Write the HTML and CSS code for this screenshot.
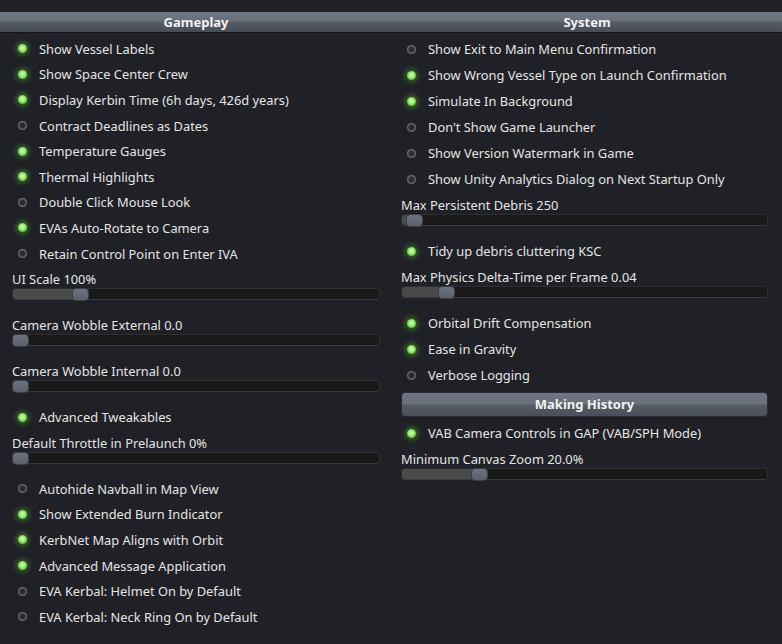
FILE: index.html
```html
<!DOCTYPE html>
<html>
<head>
<meta charset="utf-8">
<link rel="stylesheet" href="styles.css">
</head>
<body>
<div class="headbar">
  <div class="headcell">Gameplay</div>
  <div class="headcell">System</div>
</div>
<div class="cols">
  <div class="col col-left">
    <div class="toggle"><span class="dot on"></span>Show Vessel Labels</div>
    <div class="toggle"><span class="dot on"></span>Show Space Center Crew</div>
    <div class="toggle"><span class="dot on"></span>Display Kerbin Time (6h days, 426d years)</div>
    <div class="toggle"><span class="dot"></span>Contract Deadlines as Dates</div>
    <div class="toggle"><span class="dot on"></span>Temperature Gauges</div>
    <div class="toggle"><span class="dot on"></span>Thermal Highlights</div>
    <div class="toggle"><span class="dot"></span>Double Click Mouse Look</div>
    <div class="toggle"><span class="dot on"></span>EVAs Auto-Rotate to Camera</div>
    <div class="toggle"><span class="dot"></span>Retain Control Point on Enter IVA</div>
    <div class="slider">
      <div class="slabel">UI Scale 100%</div>
      <div class="track"><div class="fill" style="width:60px"></div><div class="handle"></div></div>
    </div>
    <div class="slider">
      <div class="slabel">Camera Wobble External 0.0</div>
      <div class="track"><div class="fill" style="width:0px"></div><div class="handle"></div></div>
    </div>
    <div class="slider">
      <div class="slabel">Camera Wobble Internal 0.0</div>
      <div class="track"><div class="fill" style="width:0px"></div><div class="handle"></div></div>
    </div>
    <div class="toggle"><span class="dot on"></span>Advanced Tweakables</div>
    <div class="slider">
      <div class="slabel">Default Throttle in Prelaunch 0%</div>
      <div class="track"><div class="fill" style="width:0px"></div><div class="handle"></div></div>
    </div>
    <div class="toggle"><span class="dot"></span>Autohide Navball in Map View</div>
    <div class="toggle"><span class="dot on"></span>Show Extended Burn Indicator</div>
    <div class="toggle"><span class="dot on"></span>KerbNet Map Aligns with Orbit</div>
    <div class="toggle"><span class="dot on"></span>Advanced Message Application</div>
    <div class="toggle"><span class="dot"></span>EVA Kerbal: Helmet On by Default</div>
    <div class="toggle"><span class="dot"></span>EVA Kerbal: Neck Ring On by Default</div>
  </div>
  <div class="col col-right">
    <div class="toggle"><span class="dot"></span>Show Exit to Main Menu Confirmation</div>
    <div class="toggle"><span class="dot on"></span>Show Wrong Vessel Type on Launch Confirmation</div>
    <div class="toggle"><span class="dot on"></span>Simulate In Background</div>
    <div class="toggle"><span class="dot"></span>Don't Show Game Launcher</div>
    <div class="toggle"><span class="dot"></span>Show Version Watermark in Game</div>
    <div class="toggle"><span class="dot"></span>Show Unity Analytics Dialog on Next Startup Only</div>
    <div class="slider">
      <div class="slabel">Max Persistent Debris 250</div>
      <div class="track"><div class="fill" style="width:5px"></div><div class="handle"></div></div>
    </div>
    <div class="toggle"><span class="dot on"></span>Tidy up debris cluttering KSC</div>
    <div class="slider">
      <div class="slabel">Max Physics Delta-Time per Frame 0.04</div>
      <div class="track"><div class="fill" style="width:37px"></div><div class="handle"></div></div>
    </div>
    <div class="toggle"><span class="dot on"></span>Orbital Drift Compensation</div>
    <div class="toggle"><span class="dot on"></span>Ease in Gravity</div>
    <div class="toggle"><span class="dot"></span>Verbose Logging</div>
    <div class="section">Making History</div>
    <div class="toggle"><span class="dot on"></span>VAB Camera Controls in GAP (VAB/SPH Mode)</div>
    <div class="slider">
      <div class="slabel">Minimum Canvas Zoom 20.0%</div>
      <div class="track"><div class="fill" style="width:70px"></div><div class="handle"></div></div>
    </div>
  </div>
</div>
</body>
</html>
```
FILE: styles.css
```css
html, body {
  margin: 0;
  padding: 0;
  background: #202127;
  width: 782px;
  height: 644px;
  overflow: hidden;
}
body {
  font-family: "Noto Sans", "Open Sans", sans-serif;
  font-size: 12.85px;
  color: #e4e4e4;
}
.headbar {
  margin-top: 12px;
  height: 20px;
  display: grid;
  grid-template-columns: 392px 390px;
  background: linear-gradient(#6f7681 0%, #6b717c 40%, #545a63 55%, #474d56 100%);
  border-bottom: 1px solid #141519;
}
.headcell {
  text-align: center;
  font-weight: bold;
  font-size: 13px;
  line-height: 20px;
  color: #f2f2f2;
}
.cols {
  display: grid;
  grid-template-columns: 390px 392px;
  padding-top: 3px;
}
.col-left { padding: 0 10px 0 12px; }
.col-right { padding: 0 14px 0 11px; }
.toggle {
  height: 25.6px;
  display: flex;
  align-items: center;
  gap: 12px;
  padding-left: 6px;
  white-space: nowrap;
}
.col-right .toggle { height: 26px; }
.dot {
  width: 9px;
  height: 9px;
  border-radius: 50%;
  flex: none;
  background: radial-gradient(circle at 50% 50%, #2a2a2c 0, #2e2e30 35%, #76767a 70%, #3a3a3d 100%);
}
.dot.on {
  background: radial-gradient(circle at 50% 45%, #e0ffc8 0, #98ee70 40%, #4fb82c 80%, #3c8f22 100%);
  box-shadow: 0 0 5px 2px rgba(90, 200, 50, 0.45);
}
.slider {
  height: 46px;
  padding-top: 4px;
  box-sizing: border-box;
}
.slabel {
  height: 18px;
  line-height: 18px;
  white-space: nowrap;
}
.track {
  position: relative;
  height: 12px;
  background: #19191a;
  border: 1px solid #2d2e32;
  border-bottom-color: #3a3b40;
  border-radius: 4px;
  box-sizing: border-box;
  display: flex;
}
.fill {
  height: 100%;
  background: #4a4a4b;
  border-radius: 3px 0 0 3px;
}
.handle {
  width: 17px;
  height: 13px;
  margin-top: -1px;
  margin-left: -1px;
  box-sizing: border-box;
  background: linear-gradient(#6c7380, #5a616c);
  border: 1px solid #3a3e46;
  border-radius: 4px;
}
.section {
  margin: 4px 0 3px;
  height: 25px;
  box-sizing: border-box;
  border: 1px solid #2b2d32;
  border-radius: 4px;
  background: linear-gradient(#6f7681 0%, #6a707b 45%, #555b64 55%, #4a5059 100%);
  text-align: center;
  font-weight: bold;
  font-size: 13px;
  line-height: 23px;
  color: #f2f2f2;
}
```
